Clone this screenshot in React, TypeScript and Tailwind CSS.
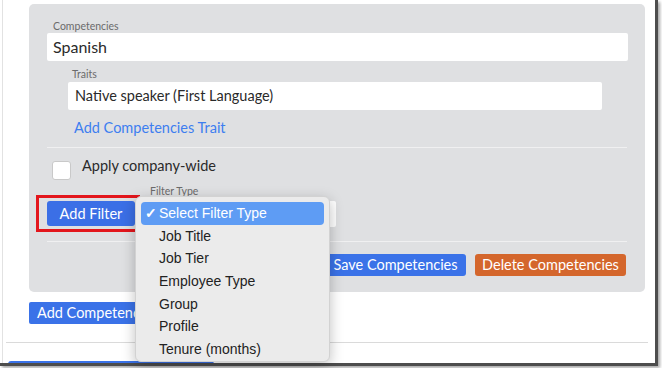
import React from "react";

const filterTypes = [
  "Job Title",
  "Job Tier",
  "Employee Type",
  "Group",
  "Profile",
  "Tenure (months)",
];

function FilterMenu() {
  return (
    <div className="absolute left-[135px] top-[196px] w-[195px] h-[166px] rounded-[6px] bg-[#ebebeb] border border-[#d2d2d2] shadow-[0_4px_14px_rgba(0,0,0,0.25)] p-[5px] font-['Liberation_Sans',sans-serif] text-[14px] text-[#222]">
      <div className="h-[23px] rounded-[4px] bg-[#5e9cf4] text-white flex items-center">
        <span className="w-[18px] pl-[4px] text-[14px] font-bold">✓</span>
        <span>Select Filter Type</span>
      </div>
      {filterTypes.map((t) => (
        <div key={t} className="h-[22.6px] flex items-center pl-[18px]">
          {t}
        </div>
      ))}
    </div>
  );
}

export default function App() {
  return (
    <div className="w-[662px] h-[368px] bg-white relative overflow-hidden font-['Lato',sans-serif] text-[#2a2a2a]">
      <div className="w-[658px] h-[366px] bg-white border-r-[3px] border-b-[3px] border-[#4d4d4d] shadow-[2px_2px_3px_rgba(0,0,0,0.35)] overflow-hidden">
        <div className="ml-[2px] h-full border-l border-[#e2e2e2]">
          <div className="pl-[26px] pt-[4px]">
            {/* Competency panel */}
            <div className="w-[616px] rounded-[5px] bg-[#dfe0e2] px-[18px] pt-[16px] pb-[16px]">
              <div className="text-[10.5px] leading-[12px] text-[#6b6b6b] ml-[6px] mb-[1px]">
                Competencies
              </div>
              <div className="h-[28px] w-[581px] rounded-[2px] bg-white flex items-center pl-[6px] text-[16px]">
                Spanish
              </div>

              <div className="ml-[21px] mr-[25px] mt-[7px]">
                <div className="text-[10.5px] leading-[12px] text-[#6b6b6b] ml-[4px] mb-[2px]">
                  Traits
                </div>
                <div className="h-[28px] rounded-[2px] bg-white flex items-center pl-[7px] text-[14.5px]">
                  Native speaker (First Language)
                </div>
                <div className="mt-[8px] ml-[6px] leading-[20px] text-[14.5px] text-[#3d7ef0]">
                  Add Competencies Trait
                </div>
              </div>

              <div className="mt-[9px] h-px bg-[#f0f0f1]" />

              <div className="mt-[10px] flex items-start">
                <div className="ml-[5px] mt-[3px] w-[19px] h-[19px] rounded-[3px] bg-white border border-[#c9c9c9]" />
                <div className="ml-[11px] leading-[16px] text-[14.5px]">
                  Apply company-wide
                </div>
              </div>

              <div className="mt-[5px] flex items-start">
                <div className="relative mt-[16px]">
                  <div className="w-[88px] h-[25px] rounded-[3px] bg-[#3b6fe6] text-white text-[14.5px] flex items-center justify-center">
                    Add Filter
                  </div>
                  <div className="absolute left-[-11px] top-[-6px] w-[104px] h-[37px] border-[3px] border-[#e3161c]" />
                </div>
                <div className="ml-[15px]">
                  <div className="text-[10.5px] leading-[12px] text-[#6b6b6b]">
                    Filter Type
                  </div>
                  <div className="mt-[4px] w-[186px] h-[26px] rounded-[2px] bg-white" />
                </div>
              </div>

              <div className="mt-[14px] h-px bg-[#f0f0f1]" />

              <div className="mt-[12px] flex justify-end gap-[9px]">
                <div className="w-[141px] h-[22px] rounded-[3px] bg-[#3a72e8] text-white text-[14.5px] flex items-center justify-center">
                  Save Competencies
                </div>
                <div className="w-[151px] h-[22px] rounded-[3px] bg-[#d4662c] text-white text-[14.5px] flex items-center justify-center mr-[1px]">
                  Delete Competencies
                </div>
              </div>
            </div>

            <div className="mt-[10px] w-[140px] h-[22px] rounded-[2px] bg-[#3a72e8] text-white text-[14.5px] flex items-center pl-[8px] whitespace-nowrap">
              Add Competencies
            </div>
          </div>

          <div className="mt-[18px] ml-[3px] w-[642px] h-px bg-[#dadada]" />
          <div className="mt-[18px] ml-[5px] w-[206px] h-[6px] rounded-t-[3px] bg-[#3a72e8]" />
        </div>
      </div>
      <FilterMenu />
    </div>
  );
}
